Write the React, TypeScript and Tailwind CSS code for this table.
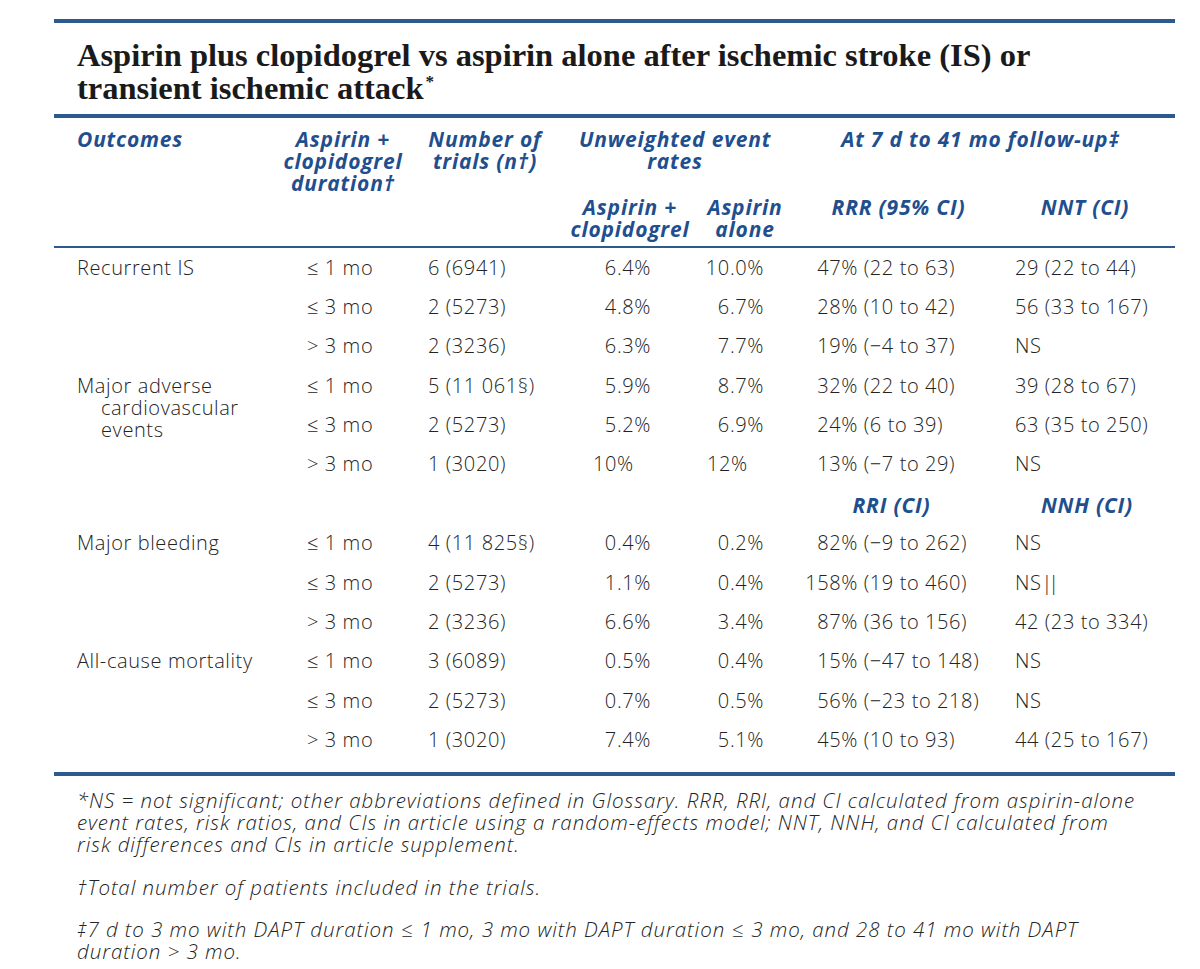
import React from 'react'

const BLUE = 'text-[#1f4f8e]'

type Row = {
  outcome?: string[]
  dur: string
  trials: string
  ac: string
  alone: string
  pct: string
  ci: string
  nn: React.ReactNode
  left?: boolean
}

const rows: Row[] = [
  { outcome: ['Recurrent IS'], dur: '≤ 1 mo', trials: '6 (6941)', ac: '6.4%', alone: '10.0%', pct: '47%', ci: '(22 to 63)', nn: '29 (22 to 44)' },
  { dur: '≤ 3 mo', trials: '2 (5273)', ac: '4.8%', alone: '6.7%', pct: '28%', ci: '(10 to 42)', nn: '56 (33 to 167)' },
  { dur: '> 3 mo', trials: '2 (3236)', ac: '6.3%', alone: '7.7%', pct: '19%', ci: '(−4 to 37)', nn: 'NS' },
  { outcome: ['Major adverse', 'cardiovascular', 'events'], dur: '≤ 1 mo', trials: '5 (11 061§)', ac: '5.9%', alone: '8.7%', pct: '32%', ci: '(22 to 40)', nn: '39 (28 to 67)' },
  { dur: '≤ 3 mo', trials: '2 (5273)', ac: '5.2%', alone: '6.9%', pct: '24%', ci: '(6 to 39)', nn: '63 (35 to 250)' },
  { dur: '> 3 mo', trials: '1 (3020)', ac: '10%', alone: '12%', pct: '13%', ci: '(−7 to 29)', nn: 'NS', left: true },
]

const rows2: Row[] = [
  { outcome: ['Major bleeding'], dur: '≤ 1 mo', trials: '4 (11 825§)', ac: '0.4%', alone: '0.2%', pct: '82%', ci: '(−9 to 262)', nn: 'NS' },
  { dur: '≤ 3 mo', trials: '2 (5273)', ac: '1.1%', alone: '0.4%', pct: '158%', ci: '(19 to 460)', nn: <>NS<span className="tracking-[-4px]">||</span></> },
  { dur: '> 3 mo', trials: '2 (3236)', ac: '6.6%', alone: '3.4%', pct: '87%', ci: '(36 to 156)', nn: '42 (23 to 334)' },
  { outcome: ['All-cause mortality'], dur: '≤ 1 mo', trials: '3 (6089)', ac: '0.5%', alone: '0.4%', pct: '15%', ci: '(−47 to 148)', nn: 'NS' },
  { dur: '≤ 3 mo', trials: '2 (5273)', ac: '0.7%', alone: '0.5%', pct: '56%', ci: '(−23 to 218)', nn: 'NS' },
  { dur: '> 3 mo', trials: '1 (3020)', ac: '7.4%', alone: '5.1%', pct: '45%', ci: '(10 to 93)', nn: '44 (25 to 167)' },
]

const GRID = 'grid grid-cols-[229px_120px_157px_140px_90px_215px_170px]'

function DataRow({ r }: { r: Row }) {
  return (
    <div className={`${GRID} h-[39.4px] leading-[22px] pt-[8.5px]`}>
      <div className="pl-[23px] whitespace-nowrap">
        {r.outcome?.map((line, i) => (
          <div key={i} className={i > 0 ? 'pl-[24px]' : ''}>{line}</div>
        ))}
      </div>
      <div className="pl-[24px] whitespace-nowrap">{r.dur}</div>
      <div className="pl-[25px] whitespace-nowrap">{r.trials}</div>
      <div className={r.left ? 'pl-[33px]' : 'text-right pr-[49px]'}>{r.ac}</div>
      <div className={r.left ? 'pl-[7px]' : 'text-right pr-[26px]'}>{r.alone}</div>
      <div className="pl-[12px] whitespace-nowrap">
        <span className="inline-block w-[56px] text-right">{r.pct}</span> {r.ci}
      </div>
      <div className="pl-[10px] whitespace-nowrap">{r.nn}</div>
    </div>
  )
}

export default function App() {
  return (
    <div className="min-h-[969px] w-[1200px] bg-white pt-[19px]">
      <div className="ml-[54px] w-[1121px]">
        <div className="h-[4px] bg-[#2c5a8e]" />
        <h1 className="pl-[23px] pt-[16px] text-[32.5px] leading-[33px] font-bold text-[#1a1a1a] font-['Liberation_Serif',serif]">
          Aspirin plus clopidogrel vs aspirin alone after ischemic stroke (IS) or
          <br />
          transient ischemic attack<span className="relative -top-[12px] ml-[2px] text-[17px] leading-none">*</span>
        </h1>
        <div className="mt-[9px] h-[4px] bg-[#2c5a8e]" />

        {/* header */}
        <div className={`${GRID} grid-rows-[68px_44px] pt-[10px] text-[21px] leading-[22px] tracking-[0.8px] font-bold italic ${BLUE} font-['Open_Sans',sans-serif]`}>
          <div className="row-span-2 pl-[23px]">Outcomes</div>
          <div className="row-span-2 text-center">
            Aspirin +<br />clopidogrel<br />duration†
          </div>
          <div className="row-span-2 pl-[20px]">
            <div className="w-[124px] text-center">Number of<br />trials (n†)</div>
          </div>
          <div className="col-span-2 text-center">
            Unweighted event<br />rates
          </div>
          <div className="col-span-2 text-center pr-[4px]">At 7 d to 41 mo follow-up‡</div>
          <div className="text-center">Aspirin +<br />clopidogrel</div>
          <div className="text-center">Aspirin<br />alone</div>
          <div className="text-center pl-[2px]">RRR (95% CI)</div>
          <div className="text-center pr-[10px]">NNT (CI)</div>
        </div>
        <div className="mt-[6px] h-[2px] bg-[#2c5a8e]" />

        {/* body */}
        <div className="text-[20px] tracking-[0.6px] font-light text-[#232323] font-['Open_Sans',sans-serif]">
          {rows.map((r, i) => <DataRow key={i} r={r} />)}
          <div className={`${GRID} h-[39.4px] leading-[22px] pt-[10px] text-[21px] tracking-[0.8px] font-bold italic ${BLUE}`}>
            <div /><div /><div /><div /><div />
            <div className="text-center pr-[12px]">RRI (CI)</div>
            <div className="text-center pr-[6px]">NNH (CI)</div>
          </div>
          {rows2.map((r, i) => <DataRow key={i} r={r} />)}
        </div>
        <div className="mt-[12px] h-[4px] bg-[#2c5a8e]" />

        {/* footnotes */}
        <div className="pl-[23px] pt-[13px] text-[20.5px] leading-[22px] tracking-[0.95px] font-light italic text-[#232323] font-['Open_Sans',sans-serif]">
          <p className="whitespace-nowrap">
            *NS = not significant; other abbreviations defined in Glossary. RRR, RRI, and CI calculated from aspirin-alone
            <br />
            event rates, risk ratios, and CIs in article using a random-effects model; NNT, NNH, and CI calculated from
            <br />
            risk differences and CIs in article supplement.
          </p>
          <p className="mt-[21px]">†Total number of patients included in the trials.</p>
          <p className="mt-[20px] whitespace-nowrap">
            ‡7 d to 3 mo with DAPT duration ≤ 1 mo, 3 mo with DAPT duration ≤ 3 mo, and 28 to 41 mo with DAPT
            <br />
            duration &gt; 3 mo.
          </p>
        </div>
      </div>
    </div>
  )
}
